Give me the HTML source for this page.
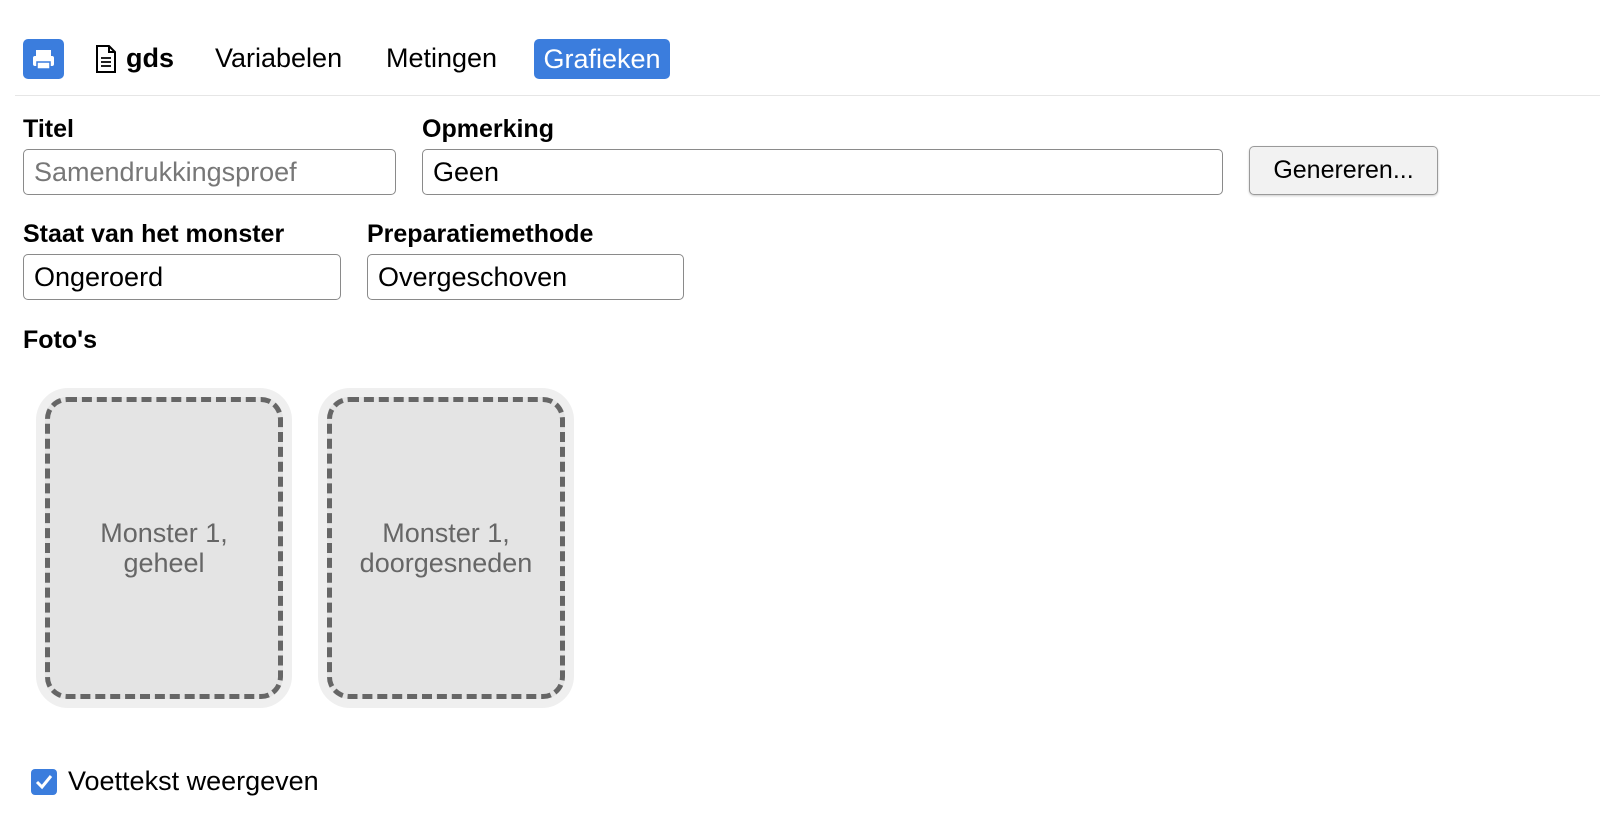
<!DOCTYPE html>
<html><head><meta charset="utf-8"><style>
body{margin:0;width:1600px;height:838px;background:#fff;font-family:"Liberation Sans",sans-serif;position:relative;overflow:hidden;color:#000}
.a{position:absolute}
.nav{font-size:27px;top:43px;line-height:30px}
.lbl{font-size:25px;font-weight:bold}
.inp{position:absolute;border:1.5px solid #8a8a8a;border-radius:5px;height:46px;box-sizing:border-box;font-size:27px;line-height:44px;padding-left:10px}
.card{position:absolute;top:388px;width:256px;height:320px;background:#efefef;border-radius:32px}
.in{position:absolute;left:9px;top:9px;right:9px;bottom:9px;border:5px dashed #666;border-radius:22px;background:#e4e4e4;display:flex;align-items:center;justify-content:center;text-align:center;font-size:27px;color:#666;line-height:30px}
</style></head><body>
<div class="a" style="left:23px;top:39px;width:41px;height:40px;background:#3b7ddd;border-radius:5px">
<svg width="41" height="40" viewBox="0 0 41 40"><rect x="13" y="11" width="15" height="6" fill="#fff"/><rect x="10" y="17" width="21" height="10" rx="2" fill="#fff"/><rect x="14" y="23" width="13" height="7" fill="#fff" stroke="#3b7ddd" stroke-width="1.5"/></svg></div>
<svg class="a" style="left:95px;top:45px" width="22" height="28" viewBox="0 0 22 28"><path d="M2 1h12l6 6v20H2z M14 1v6h6" fill="none" stroke="#000" stroke-width="2"/><path d="M6 13h10M6 17h10M6 21h10" stroke="#000" stroke-width="1.8"/></svg>
<div class="a nav" style="left:126px;font-weight:bold">gds</div>
<div class="a nav" style="left:215px">Variabelen</div>
<div class="a nav" style="left:386px">Metingen</div>
<div class="a" style="left:534px;top:39px;width:136px;height:40px;background:#3b7ddd;border-radius:5px;color:#fff;font-size:27px;line-height:40px;text-align:center">Grafieken</div>
<div class="a" style="left:15px;top:95px;width:1585px;height:1px;background:#e6e6e6"></div>
<div class="a lbl" style="left:23px;top:115px">Titel</div>
<div class="a lbl" style="left:422px;top:115px">Opmerking</div>
<div class="inp" style="left:23px;top:149px;width:373px;color:#777">Samendrukkingsproef</div>
<div class="inp" style="left:422px;top:149px;width:801px">Geen</div>
<div class="a" style="left:1249px;top:146px;width:189px;height:49px;box-sizing:border-box;border:1.5px solid #9a9a9a;border-radius:5px;background:#f2f2f2;font-size:25px;line-height:46px;text-align:center;box-shadow:0 1px 2px rgba(0,0,0,.2)">Genereren...</div>
<div class="a lbl" style="left:23px;top:220px">Staat van het monster</div>
<div class="a lbl" style="left:367px;top:220px">Preparatiemethode</div>
<div class="inp" style="left:23px;top:254px;width:318px">Ongeroerd</div>
<div class="inp" style="left:367px;top:254px;width:317px">Overgeschoven</div>
<div class="a lbl" style="left:23px;top:326px">Foto's</div>
<div class="card" style="left:36px"><div class="in">Monster 1,<br>geheel</div></div>
<div class="card" style="left:318px"><div class="in">Monster 1,<br>doorgesneden</div></div>
<div class="a" style="left:31px;top:769px;width:26px;height:26px;background:#3b7ddd;border-radius:4px"><svg width="26" height="26"><path d="M6 13l5 5 9-11" fill="none" stroke="#fff" stroke-width="3"/></svg></div>
<div class="a" style="left:68px;top:766px;font-size:27px;line-height:30px">Voettekst weergeven</div>
</body></html>
